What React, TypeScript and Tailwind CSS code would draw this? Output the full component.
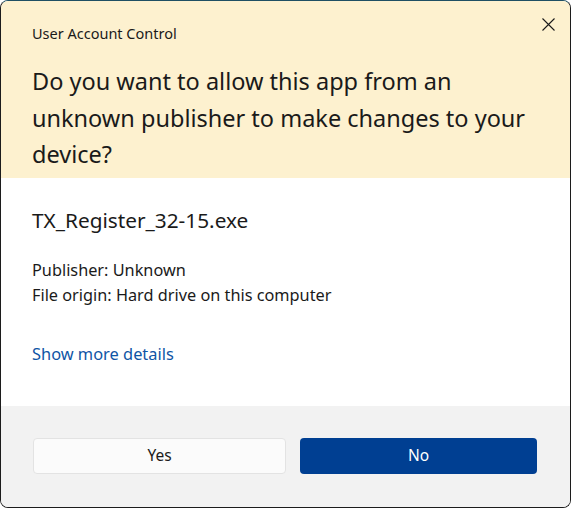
import React from "react";

export default function App() {
  return (
    <div className="w-[571px] h-[508px] bg-white">
      <div
        className="w-full h-full flex flex-col overflow-hidden rounded-[8px] border border-[#1c1c1c] border-t-[#1f4f63] text-[#1a1a1a]"
        style={{ fontFamily: '"Noto Sans", "Open Sans", sans-serif' }}
      >
        <div className="bg-[#fdf1cf] h-[177px] px-[31px] relative">
          <div className="pt-[22px] text-[14.5px] leading-[20px]">User Account Control</div>
          <button className="absolute right-[14px] top-[15px] w-[16px] h-[16px] flex items-center justify-center">
            <svg width="13" height="13" viewBox="0 0 13 13" fill="none" stroke="#1a1a1a" strokeWidth="1.1">
              <path d="M0.5 0.5 L12.5 12.5 M12.5 0.5 L0.5 12.5" />
            </svg>
          </button>
          <div className="mt-[20px] w-[520px] text-[23.5px] leading-[36.5px]">
            Do you want to allow this app from an unknown publisher to make changes to your device?
          </div>
        </div>
        <div className="bg-white flex-1 px-[31px] pt-[28px]">
          <div className="text-[20.8px] leading-[28px]">TX_Register_32-15.exe</div>
          <div className="mt-[24px] text-[16.3px] leading-[25px]">
            <div>Publisher: Unknown</div>
            <div>File origin: Hard drive on this computer</div>
          </div>
          <div className="mt-[34px] text-[16.4px] leading-[24px] text-[#0f55a5]">Show more details</div>
        </div>
        <div className="bg-[#f2f2f2] h-[101px] flex items-start gap-[14px] pl-[32px] pr-[33px] pt-[32px]">
          <button className="h-[36px] w-[253px] rounded-[4px] bg-[#fbfbfb] border border-[#e3e3e3] text-[15.5px] text-[#1a1a1a] flex items-center justify-center">
            Yes
          </button>
          <button className="h-[36px] flex-1 rounded-[4px] bg-[#003f92] text-white text-[15.5px] flex items-center justify-center">
            No
          </button>
        </div>
      </div>
    </div>
  );
}
